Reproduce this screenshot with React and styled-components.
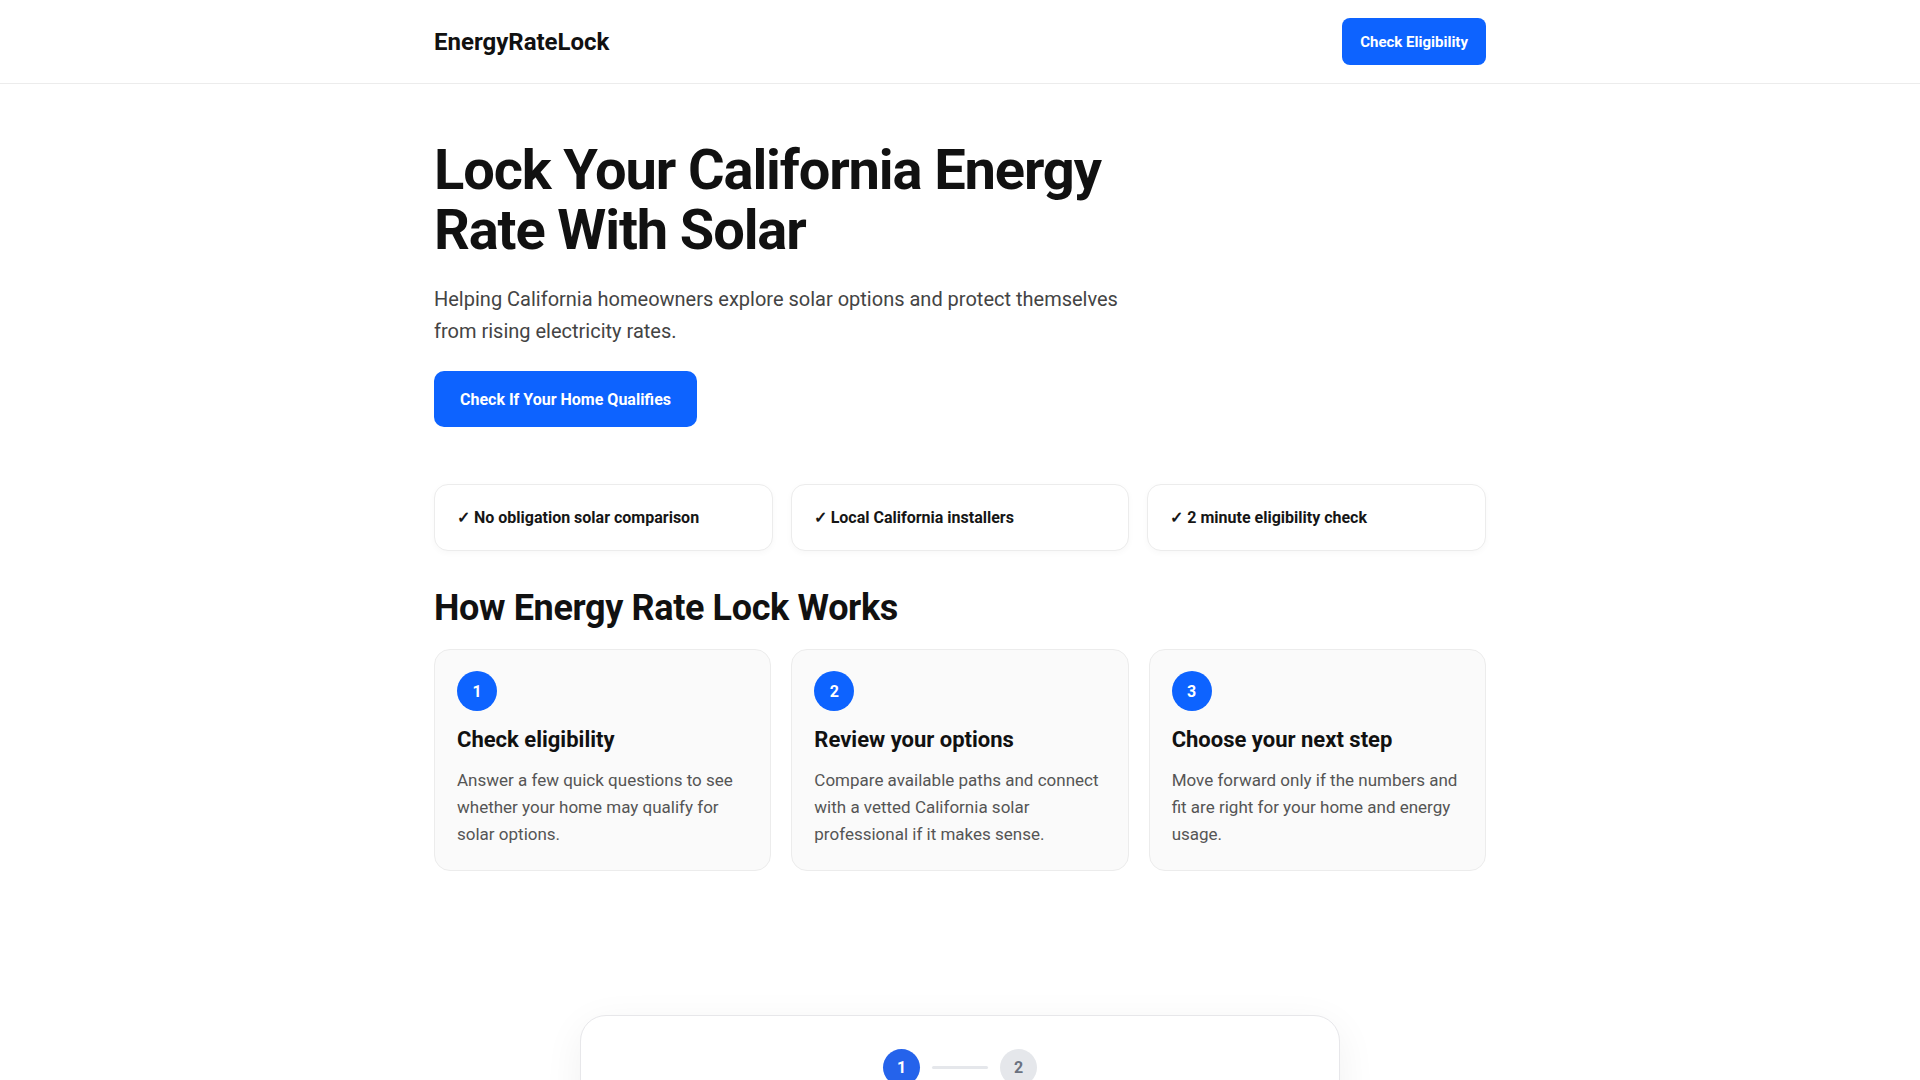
import React from "react";
import styled, { createGlobalStyle } from "styled-components";

const GlobalStyle = createGlobalStyle`
  * { box-sizing: border-box; }
  html, body { margin: 0; padding: 0; background: #ffffff; }
  body {
    font-family: Roboto, "Liberation Sans", Arial, sans-serif;
    color: #111111;
    -webkit-font-smoothing: antialiased;
  }
  h1, h2, h3, p { margin: 0; }
`;

const Header = styled.header`
  border-bottom: 1px solid #ececec;
  background: #fff;
`;

const Container = styled.div`
  max-width: 1100px;
  margin: 0 auto;
  padding: 0 24px;
`;

const HeaderInner = styled(Container)`
  height: 83px;
  display: flex;
  align-items: center;
  justify-content: space-between;
`;

const Logo = styled.div`
  font-size: 24px;
  font-weight: 700;
  color: #111;
`;

const Button = styled.button`
  border: none;
  cursor: pointer;
  background: #0d63ff;
  color: #fff;
  font-family: inherit;
  font-weight: 700;
  font-size: ${(p) => (p.$large ? "16px" : "15px")};
  height: ${(p) => (p.$large ? "56px" : "47px")};
  padding: ${(p) => (p.$large ? "0 26px" : "0 18px")};
  border-radius: ${(p) => (p.$large ? "10px" : "8px")};
`;

const Hero = styled.section`
  padding-top: 56px;
  max-width: 720px;
`;

const Title = styled.h1`
  font-size: 56px;
  line-height: 60px;
  font-weight: 700;
  letter-spacing: -0.02em;
  color: #111;
`;

const Lead = styled.p`
  margin-top: 23px;
  font-size: 20px;
  line-height: 32px;
  color: #444;
`;

const CtaRow = styled.div`
  margin-top: 24px;
`;

const TrustGrid = styled.div`
  margin-top: 57px;
  display: grid;
  grid-template-columns: repeat(3, 1fr);
  gap: 18px;
`;

const TrustCard = styled.div`
  background: #fff;
  border: 1px solid #ececec;
  border-radius: 14px;
  padding: 20px 22px;
  font-size: 16px;
  line-height: 25px;
  font-weight: 700;
  color: #161616;
  box-shadow: 0 2px 6px rgba(0, 0, 0, 0.03);
`;

const HowSection = styled.section`
  margin-top: 36px;
`;

const SectionTitle = styled.h2`
  font-size: 36px;
  line-height: 43px;
  font-weight: 700;
  letter-spacing: -0.01em;
  color: #111;
`;

const StepGrid = styled.div`
  margin-top: 19px;
  display: grid;
  grid-template-columns: repeat(3, 1fr);
  gap: 20px;
`;

const StepCard = styled.div`
  background: #fafafa;
  border: 1px solid #ececec;
  border-radius: 16px;
  padding: 21px 22px 22px;
`;

const StepNum = styled.div`
  width: 40px;
  height: 40px;
  border-radius: 50%;
  background: #0d63ff;
  color: #fff;
  display: flex;
  align-items: center;
  justify-content: center;
  font-weight: 700;
  font-size: 16px;
`;

const StepTitle = styled.h3`
  margin-top: 15px;
  font-size: 22px;
  line-height: 28px;
  font-weight: 700;
  color: #111;
`;

const StepText = styled.p`
  margin-top: 13px;
  font-size: 17px;
  line-height: 27px;
  color: #555;
`;

const QuizWrap = styled.section`
  margin: 144px auto 80px;
  max-width: 760px;
  background: #fff;
  border: 1px solid #e7e7ea;
  border-radius: 26px;
  padding: 33px 40px 40px;
  box-shadow: 0 10px 40px rgba(0, 0, 0, 0.06);
`;

const Stepper = styled.div`
  display: flex;
  align-items: center;
  justify-content: center;
  gap: 12px;
`;

const Dot = styled.div`
  width: 37px;
  height: 37px;
  border-radius: 50%;
  display: flex;
  align-items: center;
  justify-content: center;
  font-size: 16px;
  font-weight: 700;
  background: ${(p) => (p.$active ? "#2563eb" : "#e5e7eb")};
  color: ${(p) => (p.$active ? "#fff" : "#6b7280")};
`;

const Connector = styled.div`
  width: 56px;
  height: 3px;
  background: #e5e7eb;
  border-radius: 2px;
`;

const QuizTitle = styled.h3`
  margin-top: 28px;
  text-align: center;
  font-size: 26px;
  font-weight: 700;
`;

const Options = styled.div`
  margin-top: 24px;
  display: grid;
  gap: 12px;
`;

const Option = styled.button`
  border: 1px solid #e5e7eb;
  background: #fff;
  border-radius: 12px;
  padding: 16px 20px;
  font-family: inherit;
  font-size: 16px;
  text-align: left;
  color: #111;
`;

const trust = [
  "No obligation solar comparison",
  "Local California installers",
  "2 minute eligibility check",
];

const steps = [
  {
    n: 1,
    t: "Check eligibility",
    d: "Answer a few quick questions to see whether your home may qualify for solar options.",
  },
  {
    n: 2,
    t: "Review your options",
    d: "Compare available paths and connect with a vetted California solar professional if it makes sense.",
  },
  {
    n: 3,
    t: "Choose your next step",
    d: "Move forward only if the numbers and fit are right for your home and energy usage.",
  },
];

export default function App() {
  return (
    <>
      <GlobalStyle />
      <Header>
        <HeaderInner>
          <Logo>EnergyRateLock</Logo>
          <Button>Check Eligibility</Button>
        </HeaderInner>
      </Header>
      <Container>
        <Hero>
          <Title>Lock Your California Energy Rate With Solar</Title>
          <Lead>
            Helping California homeowners explore solar options and protect
            themselves from rising electricity rates.
          </Lead>
          <CtaRow>
            <Button $large>Check If Your Home Qualifies</Button>
          </CtaRow>
        </Hero>
        <TrustGrid>
          {trust.map((t) => (
            <TrustCard key={t}>✓ {t}</TrustCard>
          ))}
        </TrustGrid>
        <HowSection>
          <SectionTitle>How Energy Rate Lock Works</SectionTitle>
          <StepGrid>
            {steps.map((s) => (
              <StepCard key={s.n}>
                <StepNum>{s.n}</StepNum>
                <StepTitle>{s.t}</StepTitle>
                <StepText>{s.d}</StepText>
              </StepCard>
            ))}
          </StepGrid>
        </HowSection>
        <QuizWrap>
          <Stepper>
            <Dot $active>1</Dot>
            <Connector />
            <Dot>2</Dot>
          </Stepper>
          <QuizTitle>Do you own your home?</QuizTitle>
          <Options>
            <Option>Yes, I own my home</Option>
            <Option>No, I rent</Option>
          </Options>
        </QuizWrap>
      </Container>
    </>
  );
}
